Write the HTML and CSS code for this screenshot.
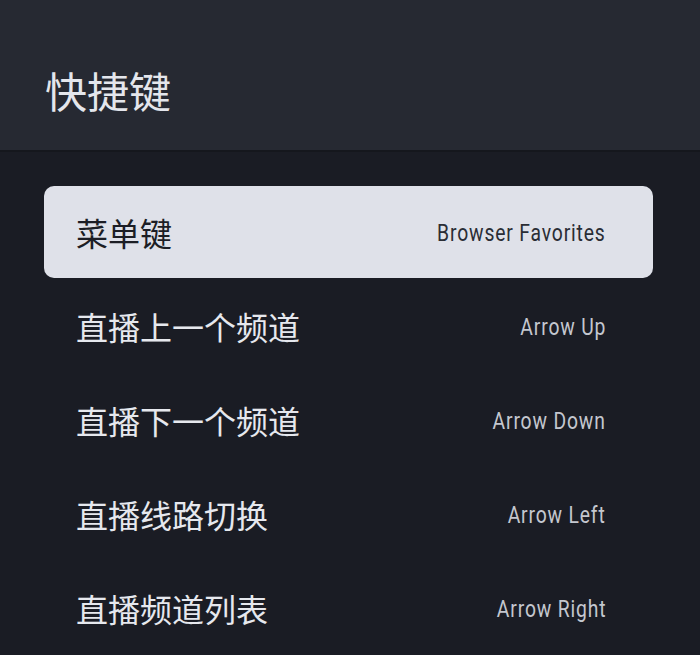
FILE: index.html
```html
<!DOCTYPE html>
<html lang="zh">
<head>
<meta charset="utf-8">
<link rel="stylesheet" href="styles.css">
</head>
<body>
<header class="header"><h1 class="title">快捷键</h1></header>
<main class="list">
  <div class="row active"><span class="label">菜单键</span><span class="key">Browser Favorites</span></div>
  <div class="row"><span class="label">直播上一个频道</span><span class="key">Arrow Up</span></div>
  <div class="row"><span class="label">直播下一个频道</span><span class="key">Arrow Down</span></div>
  <div class="row"><span class="label">直播线路切换</span><span class="key">Arrow Left</span></div>
  <div class="row"><span class="label">直播频道列表</span><span class="key">Arrow Right</span></div>
</main>
</body>
</html>
```
FILE: styles.css
```css
html, body { margin: 0; padding: 0; }
body {
  width: 700px;
  height: 655px;
  overflow: hidden;
  background: #1a1c24;
  font-family: Roboto, "Noto Sans CJK SC", sans-serif;
}
.header {
  height: 152px;
  background: #262932;
  border-bottom: 2px solid #15171d;
  display: flex;
  align-items: center;
  padding-left: 45px;
  padding-top: 30px;
  box-sizing: border-box;
}
.title {
  margin: 0;
  font-family: "Noto Sans CJK SC", sans-serif;
  font-weight: 400;
  font-size: 42px;
  color: #e4e6ec;
  line-height: 1;
}
.list {
  padding: 34px 47px 0 44px;
  display: flex;
  flex-direction: column;
  gap: 2px;
}
.row {
  height: 92px;
  display: flex;
  align-items: center;
  justify-content: space-between;
  padding: 0 47px 0 32px;
  border-radius: 10px;
}
.row.active { background: #dfe1e9; }
.label {
  font-family: "Noto Sans CJK SC", sans-serif;
  font-size: 32px;
  color: #e6e8ee;
  line-height: 1;
}
.key {
  display: inline-block;
  font-family: Roboto, sans-serif;
  font-size: 23px;
  letter-spacing: 1px;
  color: #c4c7cf;
  transform: scaleX(0.84);
  transform-origin: right center;
  margin-top: 2px;
}
.row.active .label { color: #1c1e25; }
.row.active .key { color: #2a2d35; }
```
